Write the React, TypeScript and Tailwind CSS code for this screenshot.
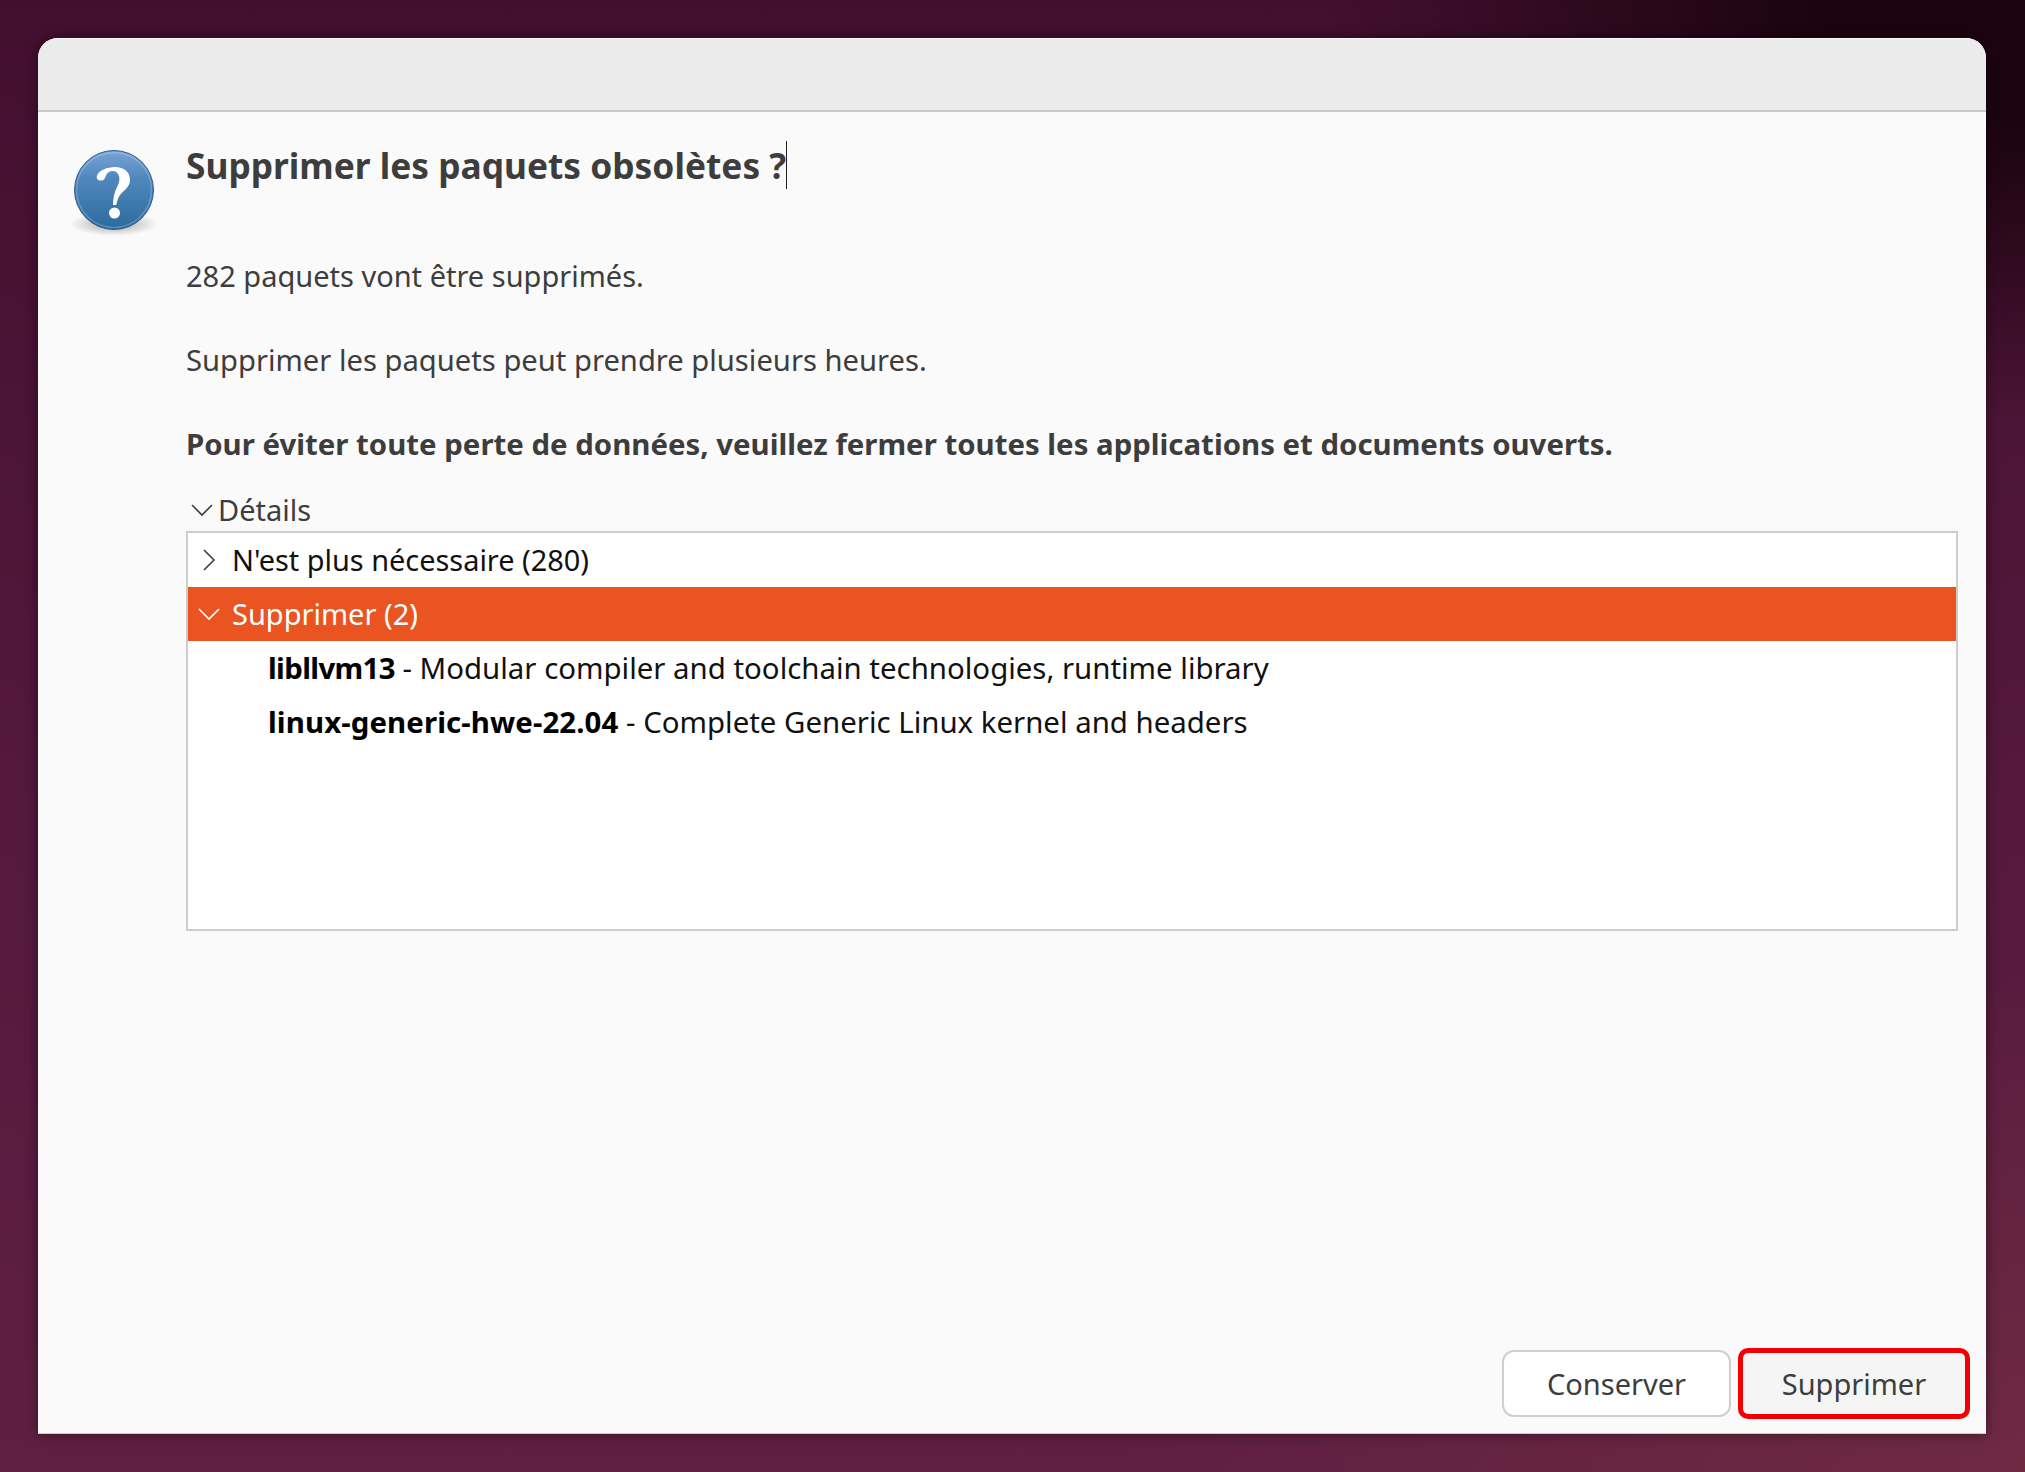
import React from 'react';

const QuestionIcon = () => (
  <svg width="92" height="92" viewBox="0 0 92 92">
    <defs>
      <linearGradient id="ball" x1="0" y1="0" x2="0" y2="1">
        <stop offset="0%" stopColor="#7aa3d6" />
        <stop offset="35%" stopColor="#4f88bd" />
        <stop offset="100%" stopColor="#2d6a9c" />
      </linearGradient>
      <radialGradient id="shade" cx="50%" cy="50%" r="50%">
        <stop offset="0%" stopColor="#000" stopOpacity="0.35" />
        <stop offset="100%" stopColor="#000" stopOpacity="0" />
      </radialGradient>
    </defs>
    <ellipse cx="46" cy="75" rx="44" ry="12" fill="url(#shade)" />
    <circle cx="46" cy="41" r="39.5" fill="url(#ball)" stroke="#2c5f8e" strokeWidth="1" />
    <circle cx="46" cy="41" r="37.5" fill="none" stroke="#ffffff" strokeOpacity="0.22" strokeWidth="1.5" />
    <path
      fill="#fff"
      d="M33 31.5C30 31.5 28 29.5 29 26.5C31 21.5 39 18 47 18C56 18 62 23 62 31C62 38 56 41 52 46C50 49 49 52 48.3 56L45 56C45 50 46 44 49 38C51 34 52 31 51 27C50 23.5 47 21.5 44 22C41 22.3 39 24 38 26.5C37 29.5 36 31.5 33 31.5Z"
    />
    <circle cx="46.5" cy="64" r="5.5" fill="#fff" />
  </svg>
);

const Chevron = ({ open, color = '#3d3d3d' }: { open: boolean; color?: string }) => (
  <svg width="22" height="22" viewBox="0 0 22 22" fill="none" stroke={color} strokeWidth="1.6" className="shrink-0">
    <path d={open ? 'M1 6l10 10 10-10' : 'M6 1l10 10-10 10'} />
  </svg>
);

export default function App() {
  return (
    <div className="w-[2025px] h-[1472px] overflow-hidden bg-[radial-gradient(ellipse_700px_420px_at_100%_0%,#1c0410_0%,#1c0410_30%,transparent_100%),radial-gradient(ellipse_900px_500px_at_100%_100%,#6f2a42_0%,transparent_100%),linear-gradient(180deg,#430f2f,#561a3e_60%,#5f1f42)] pl-[38px] pt-[38px] font-['Noto_Sans','Open_Sans',sans-serif]">
      <div className="w-[1948px] h-[1396px] flex flex-col rounded-t-[20px] overflow-hidden bg-[#fafafa] border-b border-[#d3c5cc] shadow-[0_0_14px_rgba(0,0,0,0.45)]">
        <div className="h-[74px] shrink-0 bg-[#ebebeb] border-t border-[#f8f6f7] border-b-2 border-b-[#c9c9c9]" />
        <div className="flex-1 flex min-h-0">
          <div className="w-[148px] shrink-0 pl-[30px] pt-[37px]">
            <QuestionIcon />
          </div>
          <div className="flex-1 flex flex-col min-w-0 pr-[28px]">
            <div className="mt-[28px] flex items-center h-[50px] text-[35.3px] font-bold text-[#3d3d3d]">
              <span>Supprimer les paquets obsolètes ?</span>
              <span className="w-px h-[48px] bg-[#222]" />
            </div>
            <p className="mt-[66px] text-[29px] leading-[40px] text-[#3d3d3d]">282 paquets vont être supprimés.</p>
            <p className="mt-[44px] text-[29.2px] leading-[40px] text-[#3d3d3d]">Supprimer les paquets peut prendre plusieurs heures.</p>
            <p className="mt-[44px] text-[29.4px] leading-[40px] font-bold text-[#3d3d3d]">Pour éviter toute perte de données, veuillez fermer toutes les applications et documents ouverts.</p>
            <div className="mt-[26px] flex items-center gap-[5px] h-[40px] pl-[5px] text-[29px] text-[#3d3d3d]">
              <Chevron open />
              <span>Détails</span>
            </div>
            <div className="mt-[1px] h-[400px] border-2 border-[#cdcdcd] bg-white text-[29px] text-[#111]">
              <div className="h-[54px] flex items-center pl-[10px] gap-[12px]">
                <Chevron open={false} />
                <span className="text-[28.9px]">N'est plus nécessaire (280)</span>
              </div>
              <div className="h-[54px] flex items-center pl-[10px] gap-[12px] bg-[#e95420] text-white">
                <Chevron open color="#fff" />
                <span>Supprimer (2)</span>
              </div>
              <div className="h-[54px] flex items-center pl-[80px] text-[29.4px]">
                <span><b className="text-black tracking-[-0.65px]">libllvm13</b> - Modular compiler and toolchain technologies, runtime library</span>
              </div>
              <div className="h-[54px] flex items-center pl-[80px] text-[29.4px]">
                <span><b className="text-black tracking-[0.1px]">linux-generic-hwe-22.04</b> - Complete Generic Linux kernel and headers</span>
              </div>
            </div>
            <div className="mt-auto mb-[14px] -mr-[12px] flex justify-end items-center gap-[7px]">
              <button className="w-[229px] h-[67px] rounded-[12px] border-2 border-[#cfcfcf] bg-white text-[29px] text-[#3d3d3d]">Conserver</button>
              <button className="w-[232px] h-[71px] rounded-[10px] border-[5px] border-[#f40000] bg-[#f5f5f5] text-[29px] text-[#3d3d3d]">Supprimer</button>
            </div>
          </div>
        </div>
      </div>
    </div>
  );
}
